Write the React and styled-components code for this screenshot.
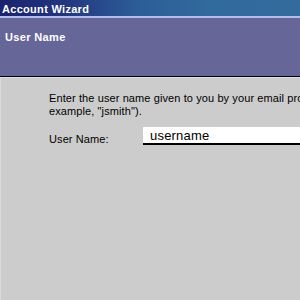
import React from "react";
import styled, { createGlobalStyle } from "styled-components";

const Global = createGlobalStyle`
  html, body { margin: 0; padding: 0; overflow: hidden; background: #cccccc; }
  #root { width: 300px; height: 300px; overflow: hidden; }
`;

const Window = styled.div`
  width: 520px;
  height: 300px;
  display: flex;
  flex-direction: column;
  background: #cccccc;
  font-family: "Liberation Sans", Arial, sans-serif;
`;

const TitleBar = styled.div`
  height: 16px;
  flex: none;
  display: flex;
  align-items: center;
  padding-left: 2px;
  background: linear-gradient(
    90deg,
    #1b2270 0%,
    #22357e 12%,
    #2c5c96 26%,
    #316a9d 40%,
    #346b9d 62%,
    #5566bb 72%,
    #6a92cc 80%,
    #6a9fd4 100%
  );
  border-bottom: 2px solid #b4bcf0;
`;

const TitleText = styled.span`
  color: #ffffff;
  font-weight: bold;
  font-size: 11px;
  letter-spacing: 0.3px;
  line-height: 16px;
  padding-top: 1px;
`;

const Header = styled.div`
  height: 59px;
  flex: none;
  background: #666699;
  border-bottom: 1px solid #000000;
  padding: 12px 0 0 5px;
  box-sizing: border-box;
`;

const HeaderTitle = styled.div`
  color: #ffffff;
  font-weight: bold;
  font-size: 11px;
  letter-spacing: 0.35px;
  line-height: 14px;
`;

const Body = styled.div`
  flex: 1;
  border-top: 1px solid #dcdcec;
  border-left: 1px solid #d8d8e0;
  padding: 14px 0 0 48px;
  display: flex;
  flex-direction: column;
  gap: 9px;
`;

const Instructions = styled.p`
  margin: 0;
  font-size: 11px;
  line-height: 13px;
  color: #000000;
  white-space: nowrap;
  letter-spacing: 0.1px;
`;

const FieldRow = styled.div`
  display: flex;
  align-items: flex-start;
`;

const Label = styled.label`
  width: 94px;
  font-size: 11px;
  line-height: 13px;
  padding-top: 6px;
  color: #000000;
  letter-spacing: 0.1px;
`;

const Input = styled.input`
  width: 220px;
  height: 15px;
  box-sizing: content-box;
  margin: 0;
  padding: 1px 0 0 7px;
  border: none;
  border-bottom: 2px solid #000000;
  background: #ffffff;
  font-family: "Liberation Sans", Arial, sans-serif;
  font-size: 13px;
  letter-spacing: 0.2px;
  color: #000000;
  outline: none;
`;

export default function App() {
  return (
    <>
      <Global />
      <Window>
        <TitleBar>
          <TitleText>Account Wizard</TitleText>
        </TitleBar>
        <Header>
          <HeaderTitle>User Name</HeaderTitle>
        </Header>
        <Body>
          <Instructions>
            Enter the user name given to you by your email provider (for
            <br />
            example, "jsmith").
          </Instructions>
          <FieldRow>
            <Label>User Name:</Label>
            <Input defaultValue="username" />
          </FieldRow>
        </Body>
      </Window>
    </>
  );
}
